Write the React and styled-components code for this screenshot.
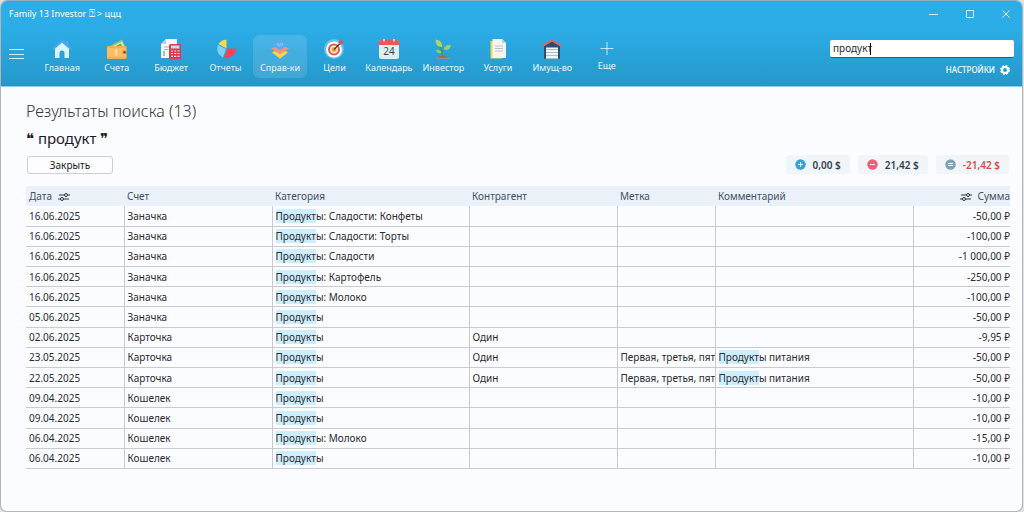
import React, { useState } from 'react';
import styled, { createGlobalStyle } from 'styled-components';

const GlobalStyle = createGlobalStyle`
  * {
    box-sizing: border-box;
  }
  html, body, #root {
    height: 100%;
  }
  body {
    margin: 0;
    background: #dfe2e5;
    font-family: 'Noto Sans', 'Open Sans', sans-serif;
    font-size: 10px;
    color: #2b2b30;
  }
  button, input {
    font: inherit;
  }
`;

const Window = styled.div`
  display: flex;
  flex-direction: column;
  min-height: 100%;
  margin-right: 1px;
  border: 1px solid #b2b5b9;
  border-top-color: #8fb0c0;
  border-radius: 7px;
  background: #fbfcff;
  overflow: hidden;
`;

const Header = styled.header`
  background: linear-gradient(#2cade7 30%, #2498ca);
  color: #fff;
  border-bottom: 1px solid #8ecbe8;
  padding-bottom: 8px;
`;

const TitleBar = styled.div`
  display: flex;
  align-items: center;
  justify-content: space-between;
  height: 25px;
  padding: 0 8px 0 8px;
  font-size: 9px;
`;

const Tofu = styled.span`
  font-family: 'DejaVu Sans', sans-serif;
  font-size: 10px;
`;

const WindowButtons = styled.div`
  display: flex;
  gap: 20px;
`;

const PlainButton = styled.button`
  display: flex;
  align-items: center;
  border: 0;
  padding: 0;
  background: none;
  color: inherit;
`;

const Toolbar = styled.div`
  display: flex;
  align-items: flex-start;
  padding: 9px 8px 0;
`;

const MenuButton = styled(PlainButton)`
  height: 38px;
  margin-right: 11px;
`;

const Nav = styled.nav`
  display: grid;
  grid-template-columns: repeat(11, 1fr);
  flex: 0 1 599px;
`;

const NavItem = styled.a`
  display: flex;
  flex-direction: column;
  align-items: center;
  height: 43px;
  padding-top: 4px;
  gap: ${p => (p.$tight ? 0 : 2)}px;
  border-radius: 6px;
  background: ${p => (p.$active ? 'rgba(255, 255, 255, 0.13)' : 'none')};
  color: #e9f6fd;
  font-size: 9px;
  line-height: 14px;
  white-space: nowrap;
  text-decoration: none;
`;

const Tools = styled.div`
  display: flex;
  flex-direction: column;
  align-items: flex-end;
  gap: 5px;
  margin-left: auto;
  padding-top: 5px;
`;

const SearchBox = styled.div`
  position: relative;
  width: 184px;
`;

const SearchInput = styled.input`
  display: block;
  width: 100%;
  height: 18px;
  padding: 0 3px 1px;
  border: 0;
  border-bottom: 1px solid #0b63b8;
  border-radius: 2px;
  outline: 0;
  background: #fff;
  color: #2b2b30;
`;

const Caret = styled.span`
  position: absolute;
  top: 3px;
  left: 40px;
  width: 1px;
  height: 12px;
  background: #000;
`;

const Settings = styled(PlainButton)`
  gap: 5px;
  margin-right: 4px;
  font-size: 8px;
  font-weight: 500;
  line-height: 14px;
`;

const Content = styled.main`
  padding: 12px 13px 14px 25px;
`;

const Title = styled.h1`
  margin: 0;
  color: #33363b;
  font-size: 16px;
  font-weight: 300;
  line-height: 24px;
`;

const Query = styled.h2`
  margin: 4px 0 6px;
  color: #1b1b1f;
  font-size: 15px;
  font-weight: 400;
  line-height: 22px;
`;

const Actions = styled.div`
  display: flex;
  align-items: center;
  justify-content: space-between;
  margin-bottom: 12px;
`;

const CloseButton = styled.button`
  width: 86px;
  height: 18px;
  margin-left: 1px;
  padding: 0;
  border: 1px solid #cdcfd3;
  border-radius: 3px;
  background: #fdfdff;
  color: #1b1b1f;
  line-height: 16px;
`;

const Totals = styled.div`
  display: flex;
  gap: 8px;
`;

const Total = styled.div`
  display: flex;
  align-items: center;
  gap: 7px;
  height: 19px;
  padding: 0 9px;
  border-radius: 3px;
  background: #eff5f8;
  color: ${p => (p.$negative ? '#dd4a4a' : '#34424d')};
  font-weight: 600;
`;

const Table = styled.table`
  width: 100%;
  height: 283px;
  table-layout: fixed;
  border-collapse: collapse;
`;

const HeadCell = styled.th`
  width: ${p => p.$width}px;
  height: 20px;
  padding: 0 ${p => (p.$right ? 0 : 3)}px 0 3px;
  background: #eaf1f9;
  color: #3f5160;
  font-weight: 400;
  line-height: 14px;
  text-align: ${p => (p.$right ? 'right' : 'left')};

  svg {
    margin: 0 3px;
    vertical-align: -2px;
  }
`;

const Cell = styled.td`
  height: 20px;
  padding: 0 3px;
  border-bottom: 1px solid #c9cbcf;
  border-left: 1px solid #c9cbcf;
  overflow: hidden;
  line-height: 14px;
  white-space: nowrap;

  &:first-child {
    border-left: 0;
  }
  &:last-child {
    padding-right: 0;
    text-align: right;
  }
`;

const Mark = styled.mark`
  background: #cdeefd;
  color: inherit;
`;

const Icon = ({ children }) => (
  <svg width="20" height="20" viewBox="0 0 20 20" fill="none" aria-hidden="true">
    {children}
  </svg>
);

const HomeIcon = () => (
  <Icon>
    <path d="M3 9l7-6 7 6v10h-4.500v-5a2.500 2.500 0 0 0-5 0v5H3z" fill="#daf3ff" />
    <path d="M10 0L0 9.500l1.600 1.500L10 3.600l8.400 7.400L20 9.500 16.500 6V2h-2.500v1.800z" fill="#4ba7f4" />
  </Icon>
);

const WalletIcon = () => (
  <Icon>
    <path d="M1 8L15 .5l3.500 7.500z" fill="#8ecb6b" />
    <path d="M4 8l11-5.500L17.500 8z" fill="#d7edb0" />
    <path d="M8 7.500l6-3 1 3z" fill="#6aa84f" />
    <rect y="7" width="19.500" height="13" rx="1" fill="#fcbd63" />
    <path d="M0 8h19.500M0 19h19" stroke="#e89a3d" strokeWidth=".8" />
    <rect x="15.500" y="11.500" width="4.500" height="3.500" rx="1" fill="#d98a31" />
    <circle cx="17.500" cy="13.200" r="1" fill="#604425" />
    <path d="M10.600 11.300c-.5-.9-2.800-.9-2.800.6s2.900.9 2.900 2.400-2.500 1.400-3 .5M9.200 9.800v6.800" stroke="#ffeec0" strokeWidth=".8" />
  </Icon>
);

const BudgetIcon = () => (
  <Icon>
    <path d="M5 0h11v19H0V5z" fill="#f4f8fb" />
    <path d="M5 0v5H0z" fill="#bccdd8" />
    <path d="M3 8h5M3 10.500h4" stroke="#a6b3bf" />
    <path d="M3 12v5" stroke="#78c46b" strokeWidth="1.500" />
    <rect x="8" y="5" width="12.500" height="15" rx="1.500" fill="#dc384f" />
    <rect x="10" y="6.500" width="8.500" height="3" fill="#b6e4f5" />
    <path d="M10 12h8.500M10 14.500h8.500M10 17.300h8.500" stroke="#fbe3e6" strokeWidth="1.200" strokeDasharray="2 1.250" />
  </Icon>
);

const ReportsIcon = () => (
  <Icon>
    <path d="M10.500 9.500V.8A9.500 9.500 0 0 0 2.500 5z" fill="#f5db4c" />
    <path d="M10 10L2 6a9.500 9.500 0 0 0 5 12.500z" fill="#79d2f5" />
    <path d="M11.500 9.500H20a9.500 9.500 0 0 1-12 9z" fill="#fa4259" />
  </Icon>
);

const LayersIcon = () => (
  <Icon>
    <path d="M2 13.500L10 9.500l8 4-8 6z" fill="#f8d74f" />
    <path d="M1 9.500L10 6l9 3.500-9 6z" fill="#fa9370" />
    <path d="M2 5.500L10 0l8 5.500-8 6z" fill="#55adf5" />
    <path d="M7 5.500l1.500-1M7 5.500l1.500 1.200M13 5.500l-1.500-1M13 5.500l-1.500 1.200M10.500 4l-1 3.500" stroke="#9bd4ff" />
  </Icon>
);

const GoalsIcon = () => (
  <Icon>
    <circle cx="10" cy="10" r="10" fill="#61c3ee" />
    <circle cx="10" cy="10.500" r="8" fill="#fff" />
    <circle cx="10" cy="10.500" r="6" fill="#ed5342" />
    <circle cx="10" cy="10.500" r="4" fill="#fff4e1" />
    <circle cx="10" cy="10.500" r="2.500" fill="#e9a63c" />
    <path d="M10 10.500l6-6" stroke="#5b3136" strokeWidth="1.200" />
    <path d="M14.500 5.500l.3-2.800L17.500 0l.5 2.200 2 .7-2.700 2.500z" fill="#e84c55" />
  </Icon>
);

const CalendarIcon = () => (
  <Icon>
    <rect y="1" width="20" height="19" rx="2.500" fill="#dfeef5" />
    <path d="M0 6V3.500A2.500 2.500 0 0 1 2.500 1h15A2.500 2.500 0 0 1 20 3.500V6z" fill="#ee5558" />
    <path d="M5 0v2.500M15 0v2.500" stroke="#e6f4fa" strokeWidth="1.500" />
    <text x="10" y="15.500" textAnchor="middle" fontSize="10" fill="#3e4449">24</text>
  </Icon>
);

const PlantIcon = () => (
  <Icon>
    <path d="M9.500 17C9 12 9 9 5.500 5M9.500 12.500L14 8.500M9.300 15L7 12.500" stroke="#4a9167" strokeWidth="1.200" />
    <path d="M2.500.5C7.500 1 9.500 4 9 8 4.500 8 2.500 5.500 2.500.5z" fill="#a9d765" />
    <path d="M10.500 10.500C11 7 14 5.500 18 6c-.5 4-3.500 6-7.500 4.500z" fill="#99d06a" />
    <path d="M3 11c3-.8 5 .3 5.500 3-2.800.8-5-.3-5.500-3z" fill="#8fcb66" />
    <path d="M4 19c1-2 3-1.500 5.500-2.500C12 17.500 15 17 16 19z" fill="#9c6953" />
    <path d="M3 19.200h14" stroke="#bc8b6c" />
  </Icon>
);

const ServicesIcon = () => (
  <Icon>
    <path d="M2.500 2H14v17.500H2.500z" fill="#f2d747" />
    <path d="M4.500 0H14l4 4v15H4.500z" fill="#f4f4f5" />
    <path d="M14 0v4h4z" fill="#c8ccd1" />
    <path d="M7 7h8M7 9.500h8M7 12h8" stroke="#bcc0c6" />
  </Icon>
);

const GarageIcon = () => (
  <Icon>
    <path d="M2 7l8-5 8 5v12.500h-2V9H4v10.500H2z" fill="#304d70" />
    <path d="M4 8h12v12H4z" fill="#eef6fa" />
    <path d="M4 7h12v1.500H4z" fill="#304d70" />
    <path d="M4 10.500h12M4 13.500h12M4 16.500h12M4 19.500h12" stroke="#a9c0cf" />
    <path d="M.7 7L10 1.400 19.300 7" stroke="#e86260" strokeWidth="1.800" />
  </Icon>
);

const PlusIcon = () => (
  <Icon>
    <path d="M10 3v13M3.500 9.500h13" stroke="#c7e8f8" />
  </Icon>
);

const GearIcon = () => (
  <svg width="10" height="10" viewBox="0 0 10 10" fill="none" stroke="#fff" aria-hidden="true">
    <circle cx="5" cy="5" r="3" strokeWidth="2" />
    <circle cx="5" cy="5" r="4.200" strokeWidth="1.500" strokeDasharray="1.900 1.400" />
  </svg>
);

const FilterIcon = () => (
  <svg width="12" height="10" viewBox="0 0 12 10" fill="none" stroke="#30353b" aria-hidden="true">
    <path d="M1 3h5.500M9.500 3H12M0 7h2.500M5.500 7H11" />
    <circle cx="8" cy="3" r="1.500" />
    <circle cx="4" cy="7" r="1.500" />
  </svg>
);

const Sign = ({ color, d }) => (
  <svg width="11" height="11" viewBox="0 0 11 11" aria-hidden="true">
    <circle cx="5.500" cy="5.500" r="5.200" fill={color} />
    <path d={d} stroke="#fff" fill="none" />
  </svg>
);

const nav = [
  ['Главная', HomeIcon],
  ['Счета', WalletIcon],
  ['Бюджет', BudgetIcon],
  ['Отчеты', ReportsIcon],
  ['Справ-ки', LayersIcon],
  ['Цели', GoalsIcon],
  ['Календарь', CalendarIcon],
  ['Инвестор', PlantIcon],
  ['Услуги', ServicesIcon],
  ['Имущ-во', GarageIcon],
  ['Еще', PlusIcon]
];

const rows = [
  ['16.06.2025', 'Заначка', 'Продукты: Сладости: Конфеты', '', '', '', '-50,00 ₽'],
  ['16.06.2025', 'Заначка', 'Продукты: Сладости: Торты', '', '', '', '-100,00 ₽'],
  ['16.06.2025', 'Заначка', 'Продукты: Сладости', '', '', '', '-1 000,00 ₽'],
  ['16.06.2025', 'Заначка', 'Продукты: Картофель', '', '', '', '-250,00 ₽'],
  ['16.06.2025', 'Заначка', 'Продукты: Молоко', '', '', '', '-100,00 ₽'],
  ['05.06.2025', 'Заначка', 'Продукты', '', '', '', '-50,00 ₽'],
  ['02.06.2025', 'Карточка', 'Продукты', 'Один', '', '', '-9,95 ₽'],
  ['23.05.2025', 'Карточка', 'Продукты', 'Один', 'Первая, третья, пят', 'Продукты питания', '-50,00 ₽'],
  ['22.05.2025', 'Карточка', 'Продукты', 'Один', 'Первая, третья, пят', 'Продукты питания', '-50,00 ₽'],
  ['09.04.2025', 'Кошелек', 'Продукты', '', '', '', '-10,00 ₽'],
  ['09.04.2025', 'Кошелек', 'Продукты', '', '', '', '-10,00 ₽'],
  ['06.04.2025', 'Кошелек', 'Продукты: Молоко', '', '', '', '-15,00 ₽'],
  ['06.04.2025', 'Кошелек', 'Продукты', '', '', '', '-10,00 ₽']
];

function Highlight({ text }) {
  if (!text.startsWith('Продукт')) return text;
  return (
    <>
      <Mark>{text.slice(0, 7)}</Mark>
      {text.slice(7)}
    </>
  );
}

function AppHeader() {
  const [search, setSearch] = useState('продукт');

  return (
    <Header>
      <TitleBar>
        <span>
          Family 13 Investor <Tofu>⍰</Tofu> &gt; ццц
        </span>
        <WindowButtons>
          <PlainButton aria-label="Свернуть">
            <svg width="16" height="16" stroke="#d5effb">
              <path d="M3 8.500h9" />
            </svg>
          </PlainButton>
          <PlainButton aria-label="Развернуть">
            <svg width="16" height="16" stroke="#d5effb" fill="none">
              <path d="M4.500 4.500h7v7h-7z" />
            </svg>
          </PlainButton>
          <PlainButton aria-label="Закрыть окно">
            <svg width="16" height="16" stroke="#d5effb">
              <path d="M4 4l8 8M12 4l-8 8" />
            </svg>
          </PlainButton>
        </WindowButtons>
      </TitleBar>
      <Toolbar>
        <MenuButton aria-label="Меню">
          <svg width="15" height="12" stroke="#d5effb">
            <path d="M0 1.500h15M0 6.500h15M0 10.500h15" />
          </svg>
        </MenuButton>
        <Nav>
          {nav.map(([label, NavIcon]) => (
            <NavItem key={label} href="#" $active={label === 'Справ-ки'} $tight={label === 'Еще'}>
              <NavIcon />
              {label}
            </NavItem>
          ))}
        </Nav>
        <Tools>
          <SearchBox>
            <SearchInput aria-label="Поиск" value={search} onChange={e => setSearch(e.target.value)} />
            <Caret />
          </SearchBox>
          <Settings>
            НАСТРОЙКИ
            <GearIcon />
          </Settings>
        </Tools>
      </Toolbar>
    </Header>
  );
}

function Results() {
  return (
    <Table>
      <thead>
        <tr>
          <HeadCell $width={98}>
            Дата <FilterIcon />
          </HeadCell>
          <HeadCell $width={148}>Счет</HeadCell>
          <HeadCell $width={197}>Категория</HeadCell>
          <HeadCell $width={148}>Контрагент</HeadCell>
          <HeadCell $width={98}>Метка</HeadCell>
          <HeadCell $width={198}>Комментарий</HeadCell>
          <HeadCell $width={97} $right>
            <FilterIcon /> Сумма
          </HeadCell>
        </tr>
      </thead>
      <tbody>
        {rows.map((row, i) => (
          <tr key={i}>
            {row.map((text, j) => (
              <Cell key={j}>
                <Highlight text={text} />
              </Cell>
            ))}
          </tr>
        ))}
      </tbody>
    </Table>
  );
}

export default function App() {
  return (
    <>
      <GlobalStyle />
      <Window>
        <AppHeader />
        <Content>
          <Title>Результаты поиска (13)</Title>
          <Query>❝ продукт ❞</Query>
          <Actions>
            <CloseButton>Закрыть</CloseButton>
            <Totals>
              <Total>
                <Sign color="#2ba7df" d="M5.500 3v5M3 5.500h5" />
                0,00 $
              </Total>
              <Total>
                <Sign color="#ef5d78" d="M3 5.500h5" />
                21,42 $
              </Total>
              <Total $negative>
                <Sign color="#7fa1b6" d="M3 4.500h5M3 6.500h5" />
                -21,42 $
              </Total>
            </Totals>
          </Actions>
          <Results />
        </Content>
      </Window>
    </>
  );
}
